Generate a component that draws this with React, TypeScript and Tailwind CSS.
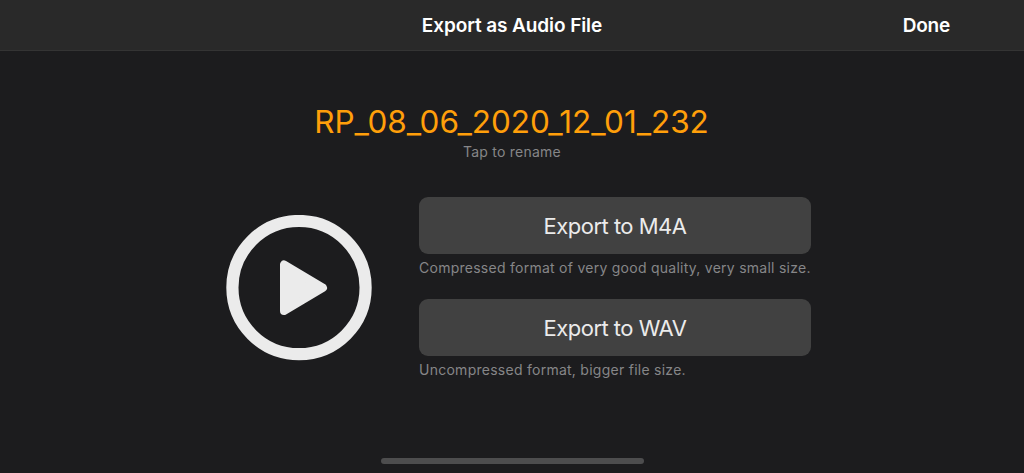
import React from 'react';

interface ExportOptionProps {
  label: string;
  description: string;
}

const ExportOption: React.FC<ExportOptionProps> = ({ label, description }) => {
  return (
    <div className="h-[102px]">
      <button className="block h-[57px] w-full rounded-[9px] bg-[#414141] pt-px text-[22px] leading-[57px] tracking-[-0.52px] text-[#ebebeb]">
        {label}
      </button>
      <p className="mt-1 whitespace-nowrap text-[14px] leading-5 tracking-[0.26px] text-[#868688]">
        {description}
      </p>
    </div>
  );
};

const PlayButton: React.FC = () => {
  return (
    <button aria-label="Play" className="mt-[18px] h-[146px] w-[146px]">
      <svg viewBox="0 0 146 146" className="h-full w-full">
        <circle cx="73" cy="72.6" r="66.6" fill="none" stroke="#ebebeb" strokeWidth="12.2" />
        <path
          d="M58 49.5 L58 96 L97 72.75 Z"
          fill="#ebebeb"
          stroke="#ebebeb"
          strokeWidth="8"
          strokeLinejoin="round"
        />
      </svg>
    </button>
  );
};

const App: React.FC = () => {
  return (
    <div className="flex h-[473px] w-[1024px] flex-col overflow-hidden bg-[#1c1c1e] font-['Inter',sans-serif]">
      <header className="grid h-[51px] shrink-0 grid-cols-3 items-center border-b border-[#343434] bg-[#292929] pt-[2px] text-[19px] font-semibold tracking-[-0.1px] text-white">
        <span className="col-start-2 text-center">Export as Audio File</span>
        <button className="justify-self-end pr-[74px] tracking-[-0.2px]">Done</button>
      </header>

      <main className="flex flex-1 flex-col">
        <div className="mt-[50px] text-center">
          <h1 className="pr-px text-[31.5px] leading-[41px] tracking-[-0.05px] text-[#ff9f0a]">RP_08_06_2020_12_01_232</h1>
          <p className="text-[14px] leading-5 tracking-[0.23px] text-[#868688]">Tap to rename</p>
        </div>

        <div className="mt-[35px] flex pl-[226px]">
          <PlayButton />
          <div className="ml-[47px] w-[392px]">
            <ExportOption label="Export to M4A" description="Compressed format of very good quality, very small size." />
            <ExportOption label="Export to WAV" description="Uncompressed format, bigger file size." />
          </div>
        </div>
      </main>

      <div className="mb-[9px] h-[6px] w-[263px] self-center rounded-full bg-[#4d4d4e]"></div>
    </div>
  );
};

export default App;
